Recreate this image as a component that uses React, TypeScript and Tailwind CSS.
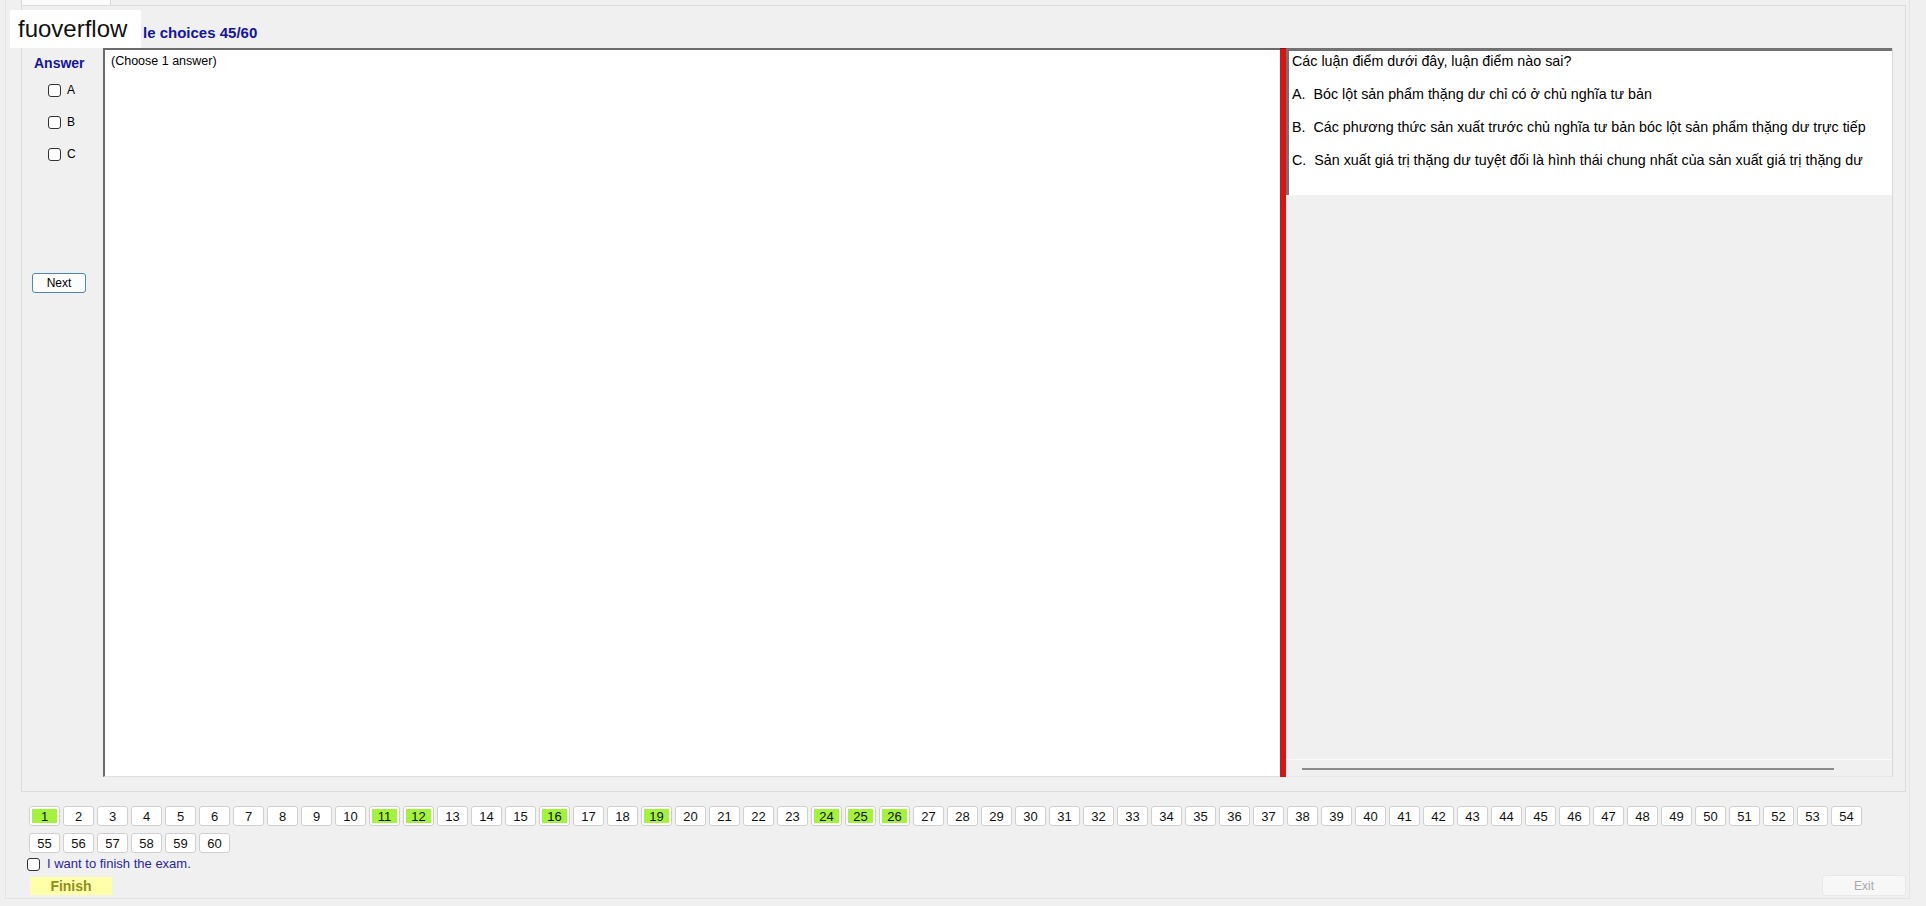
import React from "react";

const answered = [1, 11, 12, 16, 19, 24, 25, 26];

const question = "Các luận điểm dưới đây, luận điểm nào sai?";
const options = [
  "A.  Bóc lột sản phẩm thặng dư chỉ có ở chủ nghĩa tư bản",
  "B.  Các phương thức sản xuất trước chủ nghĩa tư bản bóc lột sản phẩm thặng dư trực tiếp",
  "C.  Sản xuất giá trị thặng dư tuyệt đối là hình thái chung nhất của sản xuất giá trị thặng dư",
];

function Box() {
  return <span className="block w-[13px] h-[13px] bg-white border border-[#333333] rounded-[3px]" />;
}

function QuestionButton({ n }: { n: number }) {
  const done = answered.includes(n);
  return (
    <button className="w-[31px] h-[20px] p-[2px] bg-white border border-[#cfcfcf] rounded-[3px]">
      <span
        className={
          "flex items-center justify-center w-full h-full text-[13px] leading-none text-[#111111] " +
          (done ? "bg-[#a3f23c]" : "")
        }
      >
        {n}
      </span>
    </button>
  );
}

export default function App() {
  const numbers = Array.from({ length: 60 }, (_, i) => i + 1);

  return (
    <div className="relative w-[1926px] h-[906px] bg-[#f0f0f0] overflow-hidden font-['Liberation_Sans',Arial,sans-serif] text-black">
      {/* watermark sitting over the title */}
      <div className="absolute left-[10px] top-[10px] w-[131px] h-[38px] bg-white pl-[8px] text-[24px] leading-[38px] text-[#111111] z-10">
        fuoverflow
      </div>

      <div className="ml-[5px] w-[1905px] h-[899px] border-x border-b border-[#e4e4e4]">
        {/* tab strip */}
        <div className="h-[5px] flex">
          <div className="ml-[15px] w-[90px] h-full bg-[#fbfbfb] border-x border-[#d6d6d6]" />
        </div>

        {/* tab page */}
        <div className="ml-[15px] w-[1885px] h-[787px] border border-[#dcdcdc] flex flex-col pb-[14px]">
          <div className="h-[42px] pl-[121px] flex items-center pt-[12px]">
            <span className="text-[15px] font-bold text-[#1414a0]">le choices 45/60</span>
          </div>

          <div className="flex flex-1">
            {/* answer column */}
            <div className="w-[81px] flex flex-col">
              <div className="mt-[7px] pl-[12px] h-[16px] leading-[16px] text-[14px] font-bold text-[#1414a0]">
                Answer
              </div>
              <div className="mt-[9px] flex flex-col gap-[12px] pl-[26px]">
                {["A", "B", "C"].map((l) => (
                  <label key={l} className="h-[20px] flex items-center gap-[6px] text-[12px]">
                    <Box />
                    <span>{l}</span>
                  </label>
                ))}
              </div>
              <button className="mt-[109px] ml-[10px] w-[54px] h-[20px] rounded-[3px] border border-[#4d86b8] bg-[#fbfcfd] text-[12px] leading-none">
                Next
              </button>
            </div>

            {/* answer area */}
            <div className="w-[1177px] bg-white border-l-2 border-t-2 border-[#6b6b6b] border-b border-b-[#e2e2e2]">
              <div className="pl-[6px] pt-[3px] text-[12.5px] leading-[16px]">(Choose 1 answer)</div>
            </div>

            <div className="w-[6px] bg-[#d81414] border-t border-[#8a1010]" />

            {/* question panel */}
            <div className="w-[607px] flex flex-col border-r border-[#d9d9d9] border-b border-b-[#e6e6e6]">
              <div className="h-[147px] bg-white border-l-[3px] border-t-[3px] border-[#727272] pl-[3px] flex flex-col gap-[13px] text-[14.3px] leading-[20px]">
                <div>{question}</div>
                {options.map((o) => (
                  <div key={o} className="whitespace-pre">
                    {o}
                  </div>
                ))}
              </div>
              <div className="flex-1 flex flex-col justify-end">
                <div className="h-[17px] border-t border-[#fafafa] pl-[16px] pt-[8px]">
                  <div className="w-[532px] h-[2px] bg-[#8c8c8c]" />
                </div>
              </div>
            </div>
          </div>
        </div>

        {/* question buttons */}
        <div className="mt-[14px] ml-[23px] w-[1845px] flex flex-wrap gap-x-[3px] gap-y-[7px]">
          {numbers.map((n) => (
            <QuestionButton key={n} n={n} />
          ))}
        </div>

        <label className="mt-[3px] ml-[21px] h-[16px] flex items-center gap-[7px]">
          <Box />
          <span className="text-[13px] text-[#2a1fa3]">I want to finish the exam.</span>
        </label>

        <div className="mt-[3px] flex items-start justify-between">
          <button className="mt-[2px] ml-[24px] w-[82px] h-[18px] bg-[#ffffaa] text-[14px] font-bold leading-none text-[#8f8f1a]">
            Finish
          </button>
          <button className="mr-[3px] w-[84px] h-[21px] rounded-[3px] border border-[#e8e8e8] bg-[#f7f7f7] text-[12px] leading-none text-[#a8a8a8]">
            Exit
          </button>
        </div>
      </div>
    </div>
  );
}
